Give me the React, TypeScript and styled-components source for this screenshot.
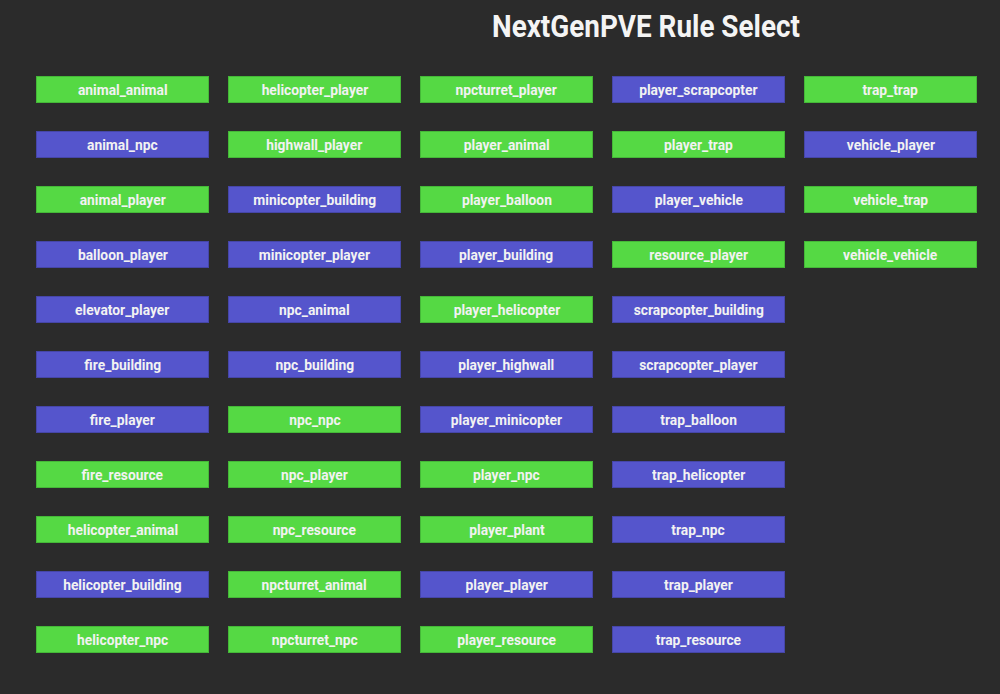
import React from "react";
import styled, { createGlobalStyle } from "styled-components";

const Global = createGlobalStyle`
  html, body { margin: 0; padding: 0; background: #2b2b2b; }
  body { font-family: Roboto, "Liberation Sans", sans-serif; }
`;

const Page = styled.div`
  width: 1000px;
  height: 694px;
  background: #2b2b2b;
  box-sizing: border-box;
  padding: 5px 0 0 36px;
  overflow: hidden;
`;

const Title = styled.h1`
  margin: 0 0 0 456px;
  height: 42px;
  line-height: 42px;
  font-size: 32px;
  font-weight: 700;
  color: #f4f4f4;
  white-space: nowrap;
`;

const Cond = styled.span<{ $sx: number }>`
  display: inline-block;
  transform: scaleX(${(p) => p.$sx});
  transform-origin: left center;
`;

const Grid = styled.div`
  margin-top: 29px;
  display: grid;
  grid-auto-flow: column;
  grid-template-rows: repeat(11, 27px);
  grid-template-columns: repeat(5, 173px);
  row-gap: 28px;
  column-gap: 19px;
`;

const Rule = styled.div<{ $on: boolean }>`
  box-sizing: border-box;
  height: 27px;
  background: ${(p) => (p.$on ? "#55d944" : "#5555cc")};
  border: 1px solid ${(p) => (p.$on ? "#45b838" : "#4646a8")};
  display: flex;
  align-items: center;
  justify-content: center;
  color: #f2f2f2;
  font-size: 15px;
  font-weight: 700;
  white-space: nowrap;
`;

const RuleText = styled.span`
  display: inline-block;
  transform: scaleX(0.92);
`;

const rules: [string, boolean][] = [
  ["animal_animal", true], ["animal_npc", false], ["animal_player", true], ["balloon_player", false],
  ["elevator_player", false], ["fire_building", false], ["fire_player", false], ["fire_resource", true],
  ["helicopter_animal", true], ["helicopter_building", false], ["helicopter_npc", true],
  ["helicopter_player", true], ["highwall_player", true], ["minicopter_building", false], ["minicopter_player", false],
  ["npc_animal", false], ["npc_building", false], ["npc_npc", true], ["npc_player", true],
  ["npc_resource", true], ["npcturret_animal", true], ["npcturret_npc", true],
  ["npcturret_player", true], ["player_animal", true], ["player_balloon", true], ["player_building", false],
  ["player_helicopter", true], ["player_highwall", false], ["player_minicopter", false], ["player_npc", true],
  ["player_plant", true], ["player_player", false], ["player_resource", true],
  ["player_scrapcopter", false], ["player_trap", true], ["player_vehicle", false], ["resource_player", true],
  ["scrapcopter_building", false], ["scrapcopter_player", false], ["trap_balloon", false], ["trap_helicopter", false],
  ["trap_npc", false], ["trap_player", false], ["trap_resource", false],
  ["trap_trap", true], ["vehicle_player", false], ["vehicle_trap", true], ["vehicle_vehicle", true],
];

export default function App() {
  return (
    <Page>
      <Global />
      <Title>
        <Cond $sx={0.87}>NextGenPVE Rule Select</Cond>
      </Title>
      <Grid>
        {rules.map(([name, on]) => (
          <Rule key={name} $on={on}>
            <RuleText>{name}</RuleText>
          </Rule>
        ))}
      </Grid>
    </Page>
  );
}
